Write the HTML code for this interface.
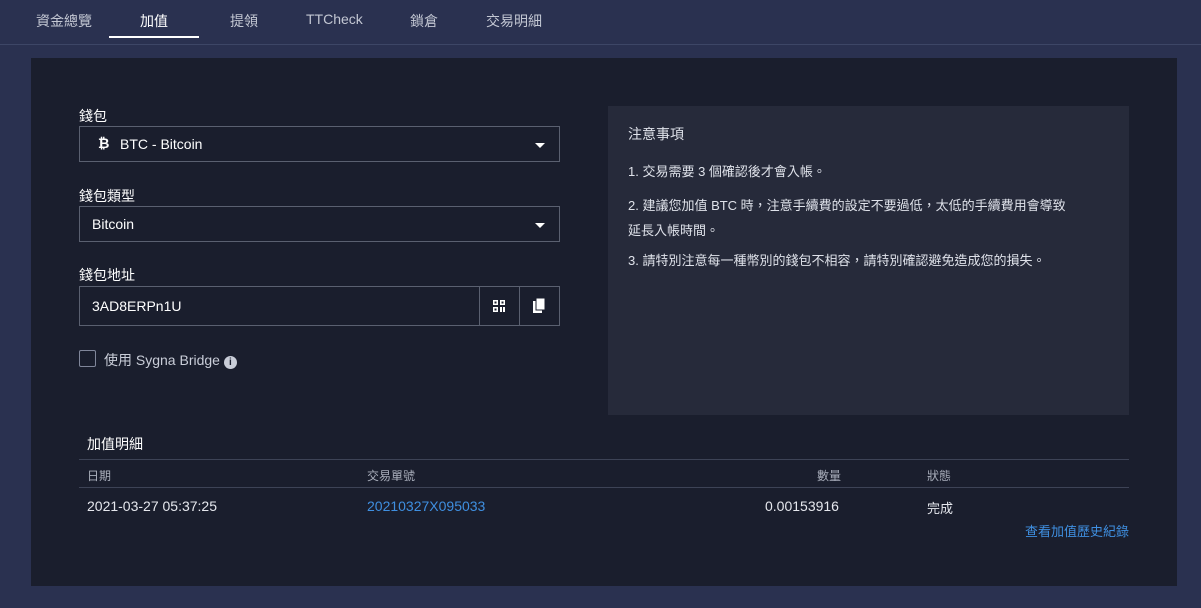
<!DOCTYPE html>
<html><head><meta charset="utf-8"><style>
*{box-sizing:border-box;margin:0;padding:0}
body{width:1201px;height:608px;background:#2a3150;font-family:"Liberation Sans","Noto Sans CJK TC",sans-serif;color:#e6e8ee;position:relative;overflow:hidden;font-size:14px}
.nav{position:absolute;top:0;left:0;width:1201px;height:45px;border-bottom:1px solid #3d4666}
.nav span{position:absolute;top:11px;font-size:14px;color:#c3c7d3}
.nav .act{color:#fff}
.ul{position:absolute;left:109px;top:36px;width:90px;height:2px;background:#fff}
.panel{position:absolute;left:31px;top:58px;width:1146px;height:528px;background:#1a1e2d}
.lbl{position:absolute;font-size:14px;color:#fff}
.box{position:absolute;left:79px;width:481px;border:1px solid #5a6070;background:#1a1e2d;font-size:14px;color:#fff}
.caret{position:absolute;right:14px;top:16px;width:0;height:0;border-left:5px solid transparent;border-right:5px solid transparent;border-top:5px solid #fff}
.info{position:absolute;left:608px;top:106px;width:521px;height:309px;background:#262a3a;font-size:13px;color:#dfe2ea;padding:20px}
.info p{position:absolute;left:20px}
.th{position:absolute;top:467px;font-size:12px;color:#a9aebb}
.td{position:absolute;top:498px;font-size:14px;color:#e6e8ee}
</style></head><body>
<div class="nav">
<span style="left:36px">資金總覽</span><span class="act" style="left:140px">加值</span><span style="left:230px">提領</span><span style="left:306px">TTCheck</span><span style="left:410px">鎖倉</span><span style="left:486px">交易明細</span>
<div class="ul"></div></div>
<div class="panel"></div>
<div class="lbl" style="left:79px;top:106px">錢包</div>
<div class="box" style="top:126px;height:36px"><span style="position:absolute;left:18px;top:8px;font-weight:bold">₿</span><span style="position:absolute;left:40px;top:9px">BTC - Bitcoin</span><div class="caret"></div></div>
<div class="lbl" style="left:79px;top:186px">錢包類型</div>
<div class="box" style="top:206px;height:36px"><span style="position:absolute;left:12px;top:9px">Bitcoin</span><div class="caret"></div></div>
<div class="lbl" style="left:79px;top:265px">錢包地址</div>
<div class="box" style="top:286px;height:40px"><span style="position:absolute;left:12px;top:11px">3AD8ERPn1U</span>
<div style="position:absolute;left:399px;top:0;width:1px;height:38px;background:#5a6070"></div>
<div style="position:absolute;left:439px;top:0;width:1px;height:38px;background:#5a6070"></div>
<svg style="position:absolute;left:413px;top:13px" width="13" height="13" viewBox="0 0 13 13" fill="#fff"><rect x="0" y="0" width="5" height="5"/><rect x="7" y="0" width="5" height="5"/><rect x="0" y="7" width="5" height="5"/><rect x="7" y="7" width="2" height="5"/><rect x="10" y="7" width="2" height="5"/><rect x="1.5" y="1.5" width="2" height="2" fill="#1a1e2d"/><rect x="8.5" y="1.5" width="2" height="2" fill="#1a1e2d"/><rect x="1.5" y="8.5" width="2" height="2" fill="#1a1e2d"/></svg>
<svg style="position:absolute;left:453px;top:11px" width="13" height="15" viewBox="0 0 13 15" fill="#fff"><rect x="0" y="3" width="9" height="12"/><rect x="3" y="0" width="9" height="12" stroke="#1a1e2d" stroke-width="1"/></svg>
</div>
<div style="position:absolute;left:79px;top:350px;width:17px;height:17px;border:1px solid #80869a;border-radius:2px"></div>
<div class="lbl" style="left:104px;top:350px;color:#c9cdd8">使用 Sygna Bridge <span style="display:inline-block;width:13px;height:13px;border-radius:50%;background:#c9cdd8;color:#1a1e2d;font-size:10px;text-align:center;line-height:13px;font-weight:bold">i</span></div>
<div class="info">
<p style="top:18px;font-size:14px">注意事項</p>
<p style="top:55px">1. 交易需要 3 個確認後才會入帳。</p>
<p style="top:87px;width:500px;line-height:25px">2. 建議您加值 BTC 時，注意手續費的設定不要過低，太低的手續費用會導致<br>延長入帳時間。</p>
<p style="top:144px">3. 請特別注意每一種幣別的錢包不相容，請特別確認避免造成您的損失。</p>
</div>
<div class="lbl" style="left:87px;top:434px">加值明細</div>
<div style="position:absolute;left:79px;top:459px;width:1050px;height:1px;background:#3d4356"></div>
<div style="position:absolute;left:79px;top:487px;width:1050px;height:1px;background:#3d4356"></div>
<div class="th" style="left:87px">日期</div><div class="th" style="left:367px">交易單號</div><div class="th" style="left:817px">數量</div><div class="th" style="left:927px">狀態</div>
<div class="td" style="left:87px">2021-03-27 05:37:25</div><div class="td" style="left:367px;color:#3f8fe0">20210327X095033</div><div class="td" style="left:765px">0.00153916</div><div class="td" style="left:927px;font-size:13px">完成</div>
<div style="position:absolute;right:72px;top:521px;font-size:13px;color:#3f8fe0">查看加值歷史紀錄</div>
</body></html>
